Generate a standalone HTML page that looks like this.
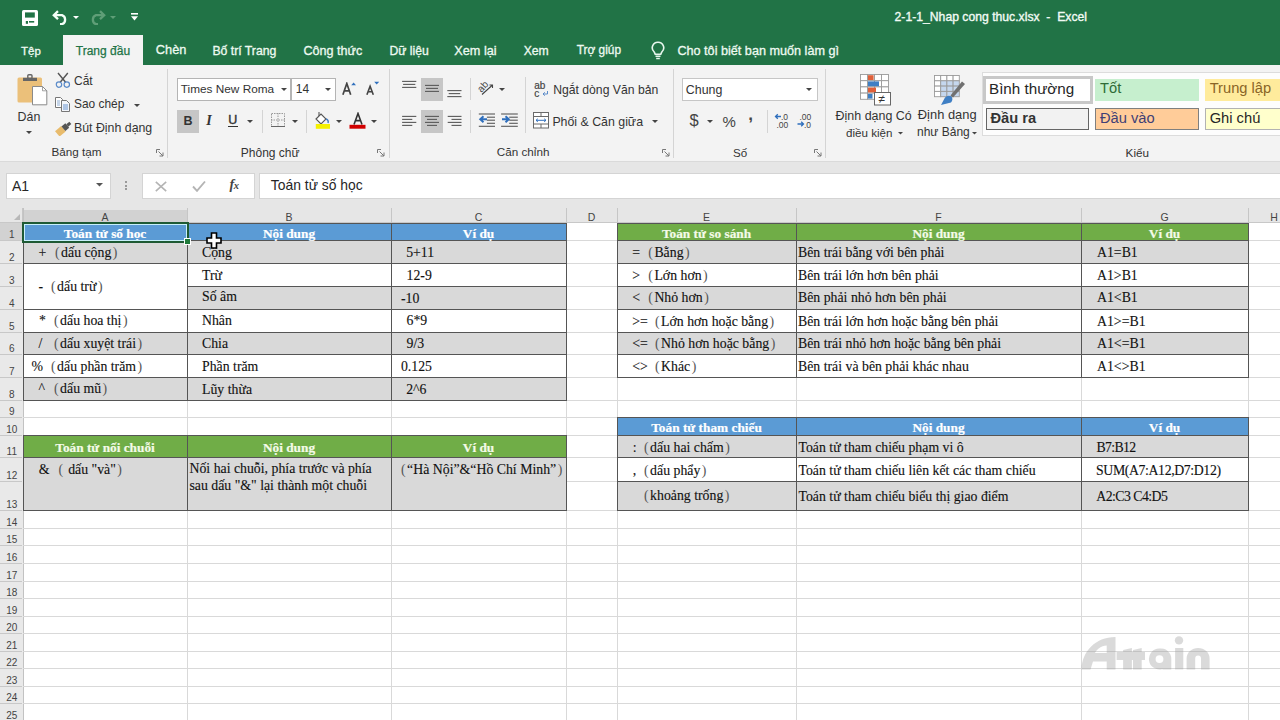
<!DOCTYPE html>
<html><head><meta charset="utf-8"><title>Excel</title>
<style>
html,body{margin:0;padding:0;}
body{width:1280px;height:720px;position:relative;overflow:hidden;background:#ffffff;font-family:"Liberation Sans",sans-serif;}
</style></head><body>
<div style="position:absolute;left:0px;top:0px;width:1280px;height:65px;background:#217346"></div>
<svg style="position:absolute;left:22px;top:9.5px;" width="16" height="16" viewBox="0 0 16 16"><rect x="0" y="0" width="16" height="16" rx="1.6" fill="#fff"/><rect x="3" y="2.4" width="9.8" height="5.2" fill="#217346"/><rect x="3.8" y="11" width="2.2" height="2.8" fill="#217346"/><rect x="7" y="11" width="5.2" height="1.6" fill="#217346"/></svg>
<svg style="position:absolute;left:51px;top:9px;" width="19" height="16" viewBox="0 0 19 16"><path d="M3.5 6.2 H11 A4.8 4.8 0 0 1 11 15.2 H9" fill="none" stroke="#f4fff8" stroke-width="2.3"/><path d="M7 2.2 L2.8 6.2 L7 10.2" stroke="#f4fff8" stroke-width="2.3" fill="none"/></svg>
<svg style="position:absolute;left:73px;top:15.5px;" width="6" height="4" viewBox="0 0 6 4"><path d="M0 0 L6 0 L3 3 Z" fill="#fff"/></svg>
<svg style="position:absolute;left:89px;top:9px;" width="18" height="16" viewBox="0 0 18 16"><path d="M14.5 6.2 H7 A4.8 4.8 0 0 0 7 15.2 H9" fill="none" stroke="#5f9e77" stroke-width="2.3"/><path d="M11 2.2 L15.2 6.2 L11 10.2" stroke="#5f9e77" stroke-width="2.3" fill="none"/></svg>
<svg style="position:absolute;left:110px;top:15.5px;" width="6" height="4" viewBox="0 0 6 4"><path d="M0 0 L6 0 L3 3 Z" fill="#5f9e77"/></svg>
<svg style="position:absolute;left:130.5px;top:13px;" width="7" height="9" viewBox="0 0 7 9"><rect x="0" y="0" width="7" height="1.6" fill="#fff"/><path d="M0 3.3 L7 3.3 L3.5 7.5 Z" fill="#fff"/></svg>
<div style="position:absolute;left:894.6px;top:10.57px;font-family:'Liberation Sans', sans-serif;font-size:12.2px;line-height:12.2px;font-weight:400;color:#f2fbf5;white-space:pre;-webkit-text-stroke:0.35px #f2fbf5;">2-1-1_Nhap cong thuc.xlsx  -  Excel</div>
<div style="position:absolute;left:63px;top:35px;width:79.5px;height:31px;background:#f3f3f3"></div>
<div style="position:absolute;left:21px;top:45.57px;font-family:'Liberation Sans', sans-serif;font-size:11.5px;line-height:11.5px;font-weight:400;color:#eefaf1;white-space:pre;-webkit-text-stroke:0.3px #eefaf1;">Tệp</div>
<div style="position:absolute;left:75.8px;top:45.14px;font-family:'Liberation Sans', sans-serif;font-size:12.0px;line-height:12.0px;font-weight:400;color:#217346;white-space:pre;-webkit-text-stroke:0.25px #217346;">Trang đầu</div>
<div style="position:absolute;left:155.8px;top:44.46px;font-family:'Liberation Sans', sans-serif;font-size:12.8px;line-height:12.8px;font-weight:400;color:#eefaf1;white-space:pre;-webkit-text-stroke:0.3px #eefaf1;">Chèn</div>
<div style="position:absolute;left:212.4px;top:44.93px;font-family:'Liberation Sans', sans-serif;font-size:12.25px;line-height:12.25px;font-weight:400;color:#eefaf1;white-space:pre;-webkit-text-stroke:0.3px #eefaf1;">Bố trí Trang</div>
<div style="position:absolute;left:303.4px;top:44.63px;font-family:'Liberation Sans', sans-serif;font-size:12.6px;line-height:12.6px;font-weight:400;color:#eefaf1;white-space:pre;-webkit-text-stroke:0.3px #eefaf1;">Công thức</div>
<div style="position:absolute;left:389.5px;top:44.97px;font-family:'Liberation Sans', sans-serif;font-size:12.2px;line-height:12.2px;font-weight:400;color:#eefaf1;white-space:pre;-webkit-text-stroke:0.3px #eefaf1;">Dữ liệu</div>
<div style="position:absolute;left:454.3px;top:44.55px;font-family:'Liberation Sans', sans-serif;font-size:12.7px;line-height:12.7px;font-weight:400;color:#eefaf1;white-space:pre;-webkit-text-stroke:0.3px #eefaf1;">Xem lại</div>
<div style="position:absolute;left:523.7px;top:44.97px;font-family:'Liberation Sans', sans-serif;font-size:12.2px;line-height:12.2px;font-weight:400;color:#eefaf1;white-space:pre;-webkit-text-stroke:0.3px #eefaf1;">Xem</div>
<div style="position:absolute;left:576.8px;top:45.27px;font-family:'Liberation Sans', sans-serif;font-size:11.85px;line-height:11.85px;font-weight:400;color:#eefaf1;white-space:pre;-webkit-text-stroke:0.3px #eefaf1;">Trợ giúp</div>
<svg style="position:absolute;left:651px;top:41px;" width="14" height="19" viewBox="0 0 14 19"><path d="M7 1.2 A5.6 5.6 0 0 0 3.2 11 L4.2 13.2 H9.8 L10.8 11 A5.6 5.6 0 0 0 7 1.2 Z" fill="none" stroke="#e8f7ee" stroke-width="1.6"/><path d="M4.5 15.3 H9.5 M5.2 17.5 H8.8" stroke="#e8f7ee" stroke-width="1.5"/></svg>
<div style="position:absolute;left:677.4px;top:44.59px;font-family:'Liberation Sans', sans-serif;font-size:12.65px;line-height:12.65px;font-weight:400;color:#eefaf1;white-space:pre;-webkit-text-stroke:0.3px #eefaf1;">Cho tôi biết bạn muốn làm gì</div>
<div style="position:absolute;left:0px;top:65px;width:1280px;height:97px;background:#f3f3f3"></div>
<div style="position:absolute;left:0px;top:162px;width:1280px;height:48px;background:#e6e6e6"></div>
<div style="position:absolute;left:0px;top:161px;width:1280px;height:1px;background:#dadada"></div>
<div style="position:absolute;left:167px;top:69px;width:1px;height:89px;background:#d4d4d4"></div>
<div style="position:absolute;left:389px;top:69px;width:1px;height:89px;background:#d4d4d4"></div>
<div style="position:absolute;left:673px;top:69px;width:1px;height:89px;background:#d4d4d4"></div>
<div style="position:absolute;left:825px;top:69px;width:1px;height:89px;background:#d4d4d4"></div>
<svg style="position:absolute;left:17px;top:74px;" width="31" height="32" viewBox="0 0 31 32"><rect x="0.5" y="3.5" width="24.5" height="25" rx="1.5" fill="#ebc07a"/><rect x="6" y="3.8" width="14" height="3.2" fill="#666"/><rect x="10.8" y="0.8" width="4.2" height="3.6" rx="1" fill="none" stroke="#666" stroke-width="1.4"/><path d="M15.5 12.5 H25.5 L29.8 16.8 V30.8 H15.5 Z" fill="#fff" stroke="#8a8a8a" stroke-width="1"/><path d="M25.5 12.5 V16.8 H29.8" fill="none" stroke="#8a8a8a" stroke-width="0.8"/></svg>
<div style="position:absolute;left:17.6px;top:110.50px;font-family:'Liberation Sans', sans-serif;font-size:12.4px;line-height:12.4px;font-weight:400;color:#333333;white-space:pre;">Dán</div>
<svg style="position:absolute;left:26px;top:130.5px;" width="6" height="4" viewBox="0 0 6 4"><path d="M0 0 L6 0 L3 3 Z" fill="#444"/></svg>
<svg style="position:absolute;left:55px;top:72px;" width="16" height="17" viewBox="0 0 16 17"><path d="M3 1 L10.8 10.5 M12.8 1 L5 10.5" stroke="#555" stroke-width="1.4"/><circle cx="4" cy="12.6" r="2.7" fill="none" stroke="#5b8bc9" stroke-width="1.2"/><circle cx="11.8" cy="12.6" r="2.7" fill="none" stroke="#5b8bc9" stroke-width="1.2"/></svg>
<div style="position:absolute;left:74px;top:75.34px;font-family:'Liberation Sans', sans-serif;font-size:12.0px;line-height:12.0px;font-weight:400;color:#333333;white-space:pre;">Cắt</div>
<svg style="position:absolute;left:55px;top:97px;" width="16" height="15" viewBox="0 0 16 15"><path d="M0.5 0.5 H5.5 L7.5 2.5 V10.5 H0.5 Z" fill="#fff" stroke="#777" stroke-width="1"/><path d="M2 4 H5 M2 6 H5 M2 8 H5" stroke="#6f98c8" stroke-width="0.8"/><path d="M6.5 3.5 H11.5 L14.5 6.5 V14.5 H6.5 Z" fill="#f3f6fb" stroke="#777" stroke-width="1"/><path d="M8 8 H13 M8 10 H13 M8 12 H13" stroke="#5b8bc9" stroke-width="0.9"/></svg>
<div style="position:absolute;left:74px;top:98.93px;font-family:'Liberation Sans', sans-serif;font-size:11.9px;line-height:11.9px;font-weight:400;color:#333333;white-space:pre;">Sao chép</div>
<svg style="position:absolute;left:134px;top:104.0px;" width="6" height="4" viewBox="0 0 6 4"><path d="M0 0 L6 0 L3 3 Z" fill="#444"/></svg>
<svg style="position:absolute;left:55px;top:120px;" width="17" height="16" viewBox="0 0 17 16"><g transform="rotate(-40 8.5 8)"><rect x="0" y="5" width="8" height="7" fill="#e8bb6c"/><rect x="8" y="5.5" width="5" height="6" fill="#555"/><rect x="13" y="7" width="4" height="3" fill="#555"/></g></svg>
<div style="position:absolute;left:74px;top:122.35px;font-family:'Liberation Sans', sans-serif;font-size:12.35px;line-height:12.35px;font-weight:400;color:#333333;white-space:pre;">Bút Định dạng</div>
<div style="position:absolute;left:51.4px;top:146.10px;font-family:'Liberation Sans', sans-serif;font-size:11.7px;line-height:11.7px;font-weight:400;color:#333333;white-space:pre;">Bảng tạm</div>
<svg style="position:absolute;left:156px;top:149px;" width="8" height="8" viewBox="0 0 8 8"><path d="M0.5 0.5 H4 M0.5 0.5 V4" stroke="#777" stroke-width="1" fill="none"/><path d="M2.5 2.5 L7 7 M7 3.5 V7 H3.5" stroke="#777" stroke-width="1" fill="none"/></svg>
<div style="position:absolute;left:177px;top:77.5px;width:114px;height:23px;background:#fff;border:1px solid #b4b4b4;box-sizing:border-box"></div>
<div style="position:absolute;left:290.5px;top:77.5px;width:45.5px;height:23px;background:#fff;border:1px solid #b4b4b4;box-sizing:border-box"></div>
<div style="position:absolute;left:180.8px;top:83.61px;font-family:'Liberation Sans', sans-serif;font-size:11.8px;line-height:11.8px;font-weight:400;color:#333333;white-space:pre;">Times New Roma</div>
<svg style="position:absolute;left:280.6px;top:87.5px;" width="6" height="4" viewBox="0 0 6 4"><path d="M0 0 L6 0 L3 3 Z" fill="#444"/></svg>
<div style="position:absolute;left:295.8px;top:83.44px;font-family:'Liberation Sans', sans-serif;font-size:12px;line-height:12px;font-weight:400;color:#333333;white-space:pre;">14</div>
<svg style="position:absolute;left:324.6px;top:87.5px;" width="6" height="4" viewBox="0 0 6 4"><path d="M0 0 L6 0 L3 3 Z" fill="#444"/></svg>
<svg style="position:absolute;left:342px;top:82px;" width="16" height="14" viewBox="0 0 16 14"><path d="M0.9 12.8 L4.8 1.5 L8.7 12.8 M2.3 8.8 H7.3" stroke="#444" stroke-width="1.7" fill="none"/><path d="M9.2 3.2 L11.6 0.6 L14 3.2 Z" fill="#2f6fbd"/></svg>
<svg style="position:absolute;left:366px;top:81px;" width="16" height="15" viewBox="0 0 16 15"><path d="M0.9 13.8 L4.1 5.3 L7.3 13.8 M2.1 10.7 H6.1" stroke="#444" stroke-width="1.6" fill="none"/><path d="M8.2 0.8 H13.2 L10.7 3.4 Z" fill="#2f6fbd"/></svg>
<div style="position:absolute;left:177px;top:110px;width:22px;height:23px;background:#c6c6c6"></div>
<div style="position:absolute;left:183.5px;top:115.42px;font-family:'Liberation Sans', sans-serif;font-size:12.5px;line-height:12.5px;font-weight:700;color:#333;white-space:pre;">B</div>
<div style="position:absolute;left:206.2px;top:114.28px;font-family:'Liberation Serif', serif;font-size:14px;line-height:14px;font-weight:700;color:#333;white-space:pre;font-style:italic;">I</div>
<div style="position:absolute;left:228.3px;top:113.92px;font-family:'Liberation Sans', sans-serif;font-size:12.5px;line-height:12.5px;font-weight:400;color:#333;white-space:pre;-webkit-text-stroke:0.4px #333;">U</div>
<div style="position:absolute;left:228.3px;top:126px;width:9.6px;height:1px;background:#333"></div>
<svg style="position:absolute;left:247.4px;top:120.0px;" width="6" height="4" viewBox="0 0 6 4"><path d="M0 0 L6 0 L3 3 Z" fill="#444"/></svg>
<div style="position:absolute;left:262px;top:110px;width:1px;height:23px;background:#d4d4d4"></div>
<svg style="position:absolute;left:271px;top:113px;" width="14" height="14" viewBox="0 0 14 14"><rect x="0.5" y="0.5" width="13" height="13" fill="none" stroke="#999" stroke-width="1" stroke-dasharray="1.5,1"/><path d="M7 0 V14 M0 7 H14" stroke="#999" stroke-width="1" stroke-dasharray="1.5,1"/><path d="M0 13.5 H14" stroke="#666" stroke-width="1"/></svg>
<svg style="position:absolute;left:291.7px;top:120.0px;" width="6" height="4" viewBox="0 0 6 4"><path d="M0 0 L6 0 L3 3 Z" fill="#444"/></svg>
<div style="position:absolute;left:306px;top:110px;width:1px;height:23px;background:#d4d4d4"></div>
<svg style="position:absolute;left:313px;top:111px;" width="18" height="19" viewBox="0 0 18 19"><path d="M3 8 L8 3 L13 8 L8 13 Z" fill="#fff" stroke="#555" stroke-width="1.1"/><path d="M6 1 V5" stroke="#555" stroke-width="1.1"/><path d="M13 8 Q16 9 15 12" stroke="#4a7fc1" stroke-width="1.5" fill="none"/><rect x="2.8" y="13" width="14.2" height="4.8" fill="#f5f000"/></svg>
<svg style="position:absolute;left:336px;top:120.0px;" width="6" height="4" viewBox="0 0 6 4"><path d="M0 0 L6 0 L3 3 Z" fill="#444"/></svg>
<svg style="position:absolute;left:349px;top:112px;" width="18" height="18" viewBox="0 0 18 18"><path d="M5 12.5 L9 1.5 L13 12.5 M6.4 8.6 H11.6" stroke="#333" stroke-width="1.6" fill="none"/><rect x="0.5" y="12.8" width="16" height="3.9" fill="#d10000"/></svg>
<svg style="position:absolute;left:371.3px;top:120.0px;" width="6" height="4" viewBox="0 0 6 4"><path d="M0 0 L6 0 L3 3 Z" fill="#444"/></svg>
<div style="position:absolute;left:240.8px;top:146.84px;font-family:'Liberation Sans', sans-serif;font-size:12.0px;line-height:12.0px;font-weight:400;color:#333333;white-space:pre;">Phông chữ</div>
<svg style="position:absolute;left:377px;top:149px;" width="8" height="8" viewBox="0 0 8 8"><path d="M0.5 0.5 H4 M0.5 0.5 V4" stroke="#777" stroke-width="1" fill="none"/><path d="M2.5 2.5 L7 7 M7 3.5 V7 H3.5" stroke="#777" stroke-width="1" fill="none"/></svg>
<div style="position:absolute;left:421px;top:77.5px;width:22px;height:23.5px;background:#c6c6c6"></div>
<div style="position:absolute;left:421px;top:110px;width:22px;height:23px;background:#c6c6c6"></div>
<svg style="position:absolute;left:0px;top:0px;pointer-events:none;" width="1280" height="720" viewBox="0 0 1280 720"><rect x="402.1" y="80.85000000000001" width="14.199999999999989" height="1.1" fill="#5a5a5a"/><rect x="403.1" y="83.85000000000001" width="12.199999999999989" height="1.1" fill="#5a5a5a"/><rect x="402.1" y="86.85000000000001" width="14.199999999999989" height="1.1" fill="#5a5a5a"/></svg>
<svg style="position:absolute;left:0px;top:0px;pointer-events:none;" width="1280" height="720" viewBox="0 0 1280 720"><rect x="425" y="84.85000000000001" width="14" height="1.1" fill="#5a5a5a"/><rect x="426" y="87.85000000000001" width="12" height="1.1" fill="#5a5a5a"/><rect x="425" y="90.85000000000001" width="14" height="1.1" fill="#5a5a5a"/></svg>
<svg style="position:absolute;left:0px;top:0px;pointer-events:none;" width="1280" height="720" viewBox="0 0 1280 720"><rect x="447.3" y="90.05" width="14.199999999999989" height="1.1" fill="#5a5a5a"/><rect x="448.7" y="93.05" width="11.5" height="1.1" fill="#5a5a5a"/><rect x="447.3" y="96.05" width="14.199999999999989" height="1.1" fill="#5a5a5a"/></svg>
<svg style="position:absolute;left:0px;top:0px;pointer-events:none;" width="1280" height="720" viewBox="0 0 1280 720"><rect x="402.1" y="115.85000000000001" width="14.199999999999989" height="1.1" fill="#5a5a5a"/><rect x="402.1" y="118.85000000000001" width="10.199999999999989" height="1.1" fill="#5a5a5a"/><rect x="402.1" y="121.85000000000001" width="14.199999999999989" height="1.1" fill="#5a5a5a"/><rect x="402.1" y="124.85000000000001" width="10.199999999999989" height="1.1" fill="#5a5a5a"/></svg>
<svg style="position:absolute;left:0px;top:0px;pointer-events:none;" width="1280" height="720" viewBox="0 0 1280 720"><rect x="425" y="115.85000000000001" width="14" height="1.1" fill="#5a5a5a"/><rect x="427" y="118.85000000000001" width="10" height="1.1" fill="#5a5a5a"/><rect x="425" y="121.85000000000001" width="14" height="1.1" fill="#5a5a5a"/><rect x="427" y="124.85000000000001" width="10" height="1.1" fill="#5a5a5a"/></svg>
<svg style="position:absolute;left:0px;top:0px;pointer-events:none;" width="1280" height="720" viewBox="0 0 1280 720"><rect x="447.7" y="115.85000000000001" width="13.800000000000011" height="1.1" fill="#5a5a5a"/><rect x="451.5" y="118.85000000000001" width="10.0" height="1.1" fill="#5a5a5a"/><rect x="447.7" y="121.85000000000001" width="13.800000000000011" height="1.1" fill="#5a5a5a"/><rect x="451.5" y="124.85000000000001" width="10.0" height="1.1" fill="#5a5a5a"/></svg>
<div style="position:absolute;left:470px;top:78px;width:1px;height:22px;background:#d4d4d4"></div>
<svg style="position:absolute;left:478px;top:80px;" width="22" height="16" viewBox="0 0 22 16"><text x="0" y="0" font-family="Liberation Sans" font-size="10" fill="#444" transform="translate(3.5 13) rotate(-48)">ab</text><path d="M4 14.5 L14.5 5 M11.5 5 L14.5 5 L14.5 8" stroke="#444" stroke-width="1.1" fill="none"/></svg>
<svg style="position:absolute;left:499px;top:87.5px;" width="6" height="4" viewBox="0 0 6 4"><path d="M0 0 L6 0 L3 3 Z" fill="#444"/></svg>
<div style="position:absolute;left:525px;top:77px;width:1px;height:56px;background:#d4d4d4"></div>
<svg style="position:absolute;left:534px;top:81px;" width="16" height="17" viewBox="0 0 16 17"><text x="0.3" y="8" font-family="Liberation Sans" font-size="10" fill="#444" stroke="#444" stroke-width="0.2">ab</text><text x="0.3" y="15.5" font-family="Liberation Sans" font-size="10" fill="#444" stroke="#444" stroke-width="0.2">c</text><path d="M13.5 10 V13 H9 M10.8 11.3 L9 13 L10.8 14.7" stroke="#5b8bc9" stroke-width="1" fill="none"/></svg>
<div style="position:absolute;left:553.2px;top:83.67px;font-family:'Liberation Sans', sans-serif;font-size:12.2px;line-height:12.2px;font-weight:400;color:#333333;white-space:pre;">Ngắt dòng Văn bản</div>
<div style="position:absolute;left:470px;top:110px;width:1px;height:23px;background:#d4d4d4"></div>
<svg style="position:absolute;left:0px;top:0px;pointer-events:none;" width="1280" height="720" viewBox="0 0 1280 720"><rect x="478.8" y="113.45" width="16.19999999999999" height="1.1" fill="#5a5a5a"/><rect x="486.9" y="116.65" width="8.100000000000023" height="1.1" fill="#5a5a5a"/><rect x="486.9" y="119.65" width="8.100000000000023" height="1.1" fill="#5a5a5a"/><rect x="486.9" y="122.75" width="8.100000000000023" height="1.1" fill="#5a5a5a"/><rect x="478.8" y="125.75" width="16.19999999999999" height="1.1" fill="#5a5a5a"/></svg>
<svg style="position:absolute;left:478px;top:114px;" width="10" height="11" viewBox="0 0 10 11"><path d="M9 5.3 H3 M5.5 2.3 L2.2 5.3 L5.5 8.3" stroke="#2f6fbd" stroke-width="1.9" fill="none"/></svg>
<svg style="position:absolute;left:0px;top:0px;pointer-events:none;" width="1280" height="720" viewBox="0 0 1280 720"><rect x="501.1" y="113.45" width="16.699999999999932" height="1.1" fill="#5a5a5a"/><rect x="509.2" y="116.65" width="8.599999999999966" height="1.1" fill="#5a5a5a"/><rect x="509.2" y="119.65" width="8.599999999999966" height="1.1" fill="#5a5a5a"/><rect x="509.2" y="122.75" width="8.599999999999966" height="1.1" fill="#5a5a5a"/><rect x="501.1" y="125.75" width="16.699999999999932" height="1.1" fill="#5a5a5a"/></svg>
<svg style="position:absolute;left:501px;top:114px;" width="10" height="11" viewBox="0 0 10 11"><path d="M1 5.3 H7 M4.5 2.3 L7.8 5.3 L4.5 8.3" stroke="#2f6fbd" stroke-width="1.9" fill="none"/></svg>
<svg style="position:absolute;left:533px;top:112px;" width="17" height="17" viewBox="0 0 17 17"><rect x="0.5" y="0.5" width="15" height="15.5" fill="#fff" stroke="#6a6a6a" stroke-width="1"/><path d="M0.5 4.5 H15.5 M0.5 12 H15.5 M8 0.5 V4.5 M8 12 V16" stroke="#6a6a6a" stroke-width="1"/><path d="M3 8.3 H13 M4.8 6.8 L3 8.3 L4.8 9.8 M11.2 6.8 L13 8.3 L11.2 9.8" stroke="#2f6fbd" stroke-width="1" fill="none"/></svg>
<div style="position:absolute;left:552.4px;top:115.75px;font-family:'Liberation Sans', sans-serif;font-size:12.35px;line-height:12.35px;font-weight:400;color:#333333;white-space:pre;">Phối &amp; Căn giữa</div>
<svg style="position:absolute;left:652px;top:120.0px;" width="6" height="4" viewBox="0 0 6 4"><path d="M0 0 L6 0 L3 3 Z" fill="#444"/></svg>
<div style="position:absolute;left:496.8px;top:146.30px;font-family:'Liberation Sans', sans-serif;font-size:11.7px;line-height:11.7px;font-weight:400;color:#333333;white-space:pre;">Căn chỉnh</div>
<svg style="position:absolute;left:661.5px;top:149px;" width="8" height="8" viewBox="0 0 8 8"><path d="M0.5 0.5 H4 M0.5 0.5 V4" stroke="#777" stroke-width="1" fill="none"/><path d="M2.5 2.5 L7 7 M7 3.5 V7 H3.5" stroke="#777" stroke-width="1" fill="none"/></svg>
<div style="position:absolute;left:682px;top:78px;width:135.5px;height:23px;background:#fff;border:1px solid #c6c6c6;box-sizing:border-box"></div>
<div style="position:absolute;left:685.8px;top:83.50px;font-family:'Liberation Sans', sans-serif;font-size:12.4px;line-height:12.4px;font-weight:400;color:#333333;white-space:pre;">Chung</div>
<svg style="position:absolute;left:806px;top:87.5px;" width="6" height="4" viewBox="0 0 6 4"><path d="M0 0 L6 0 L3 3 Z" fill="#444"/></svg>
<div style="position:absolute;left:689.6px;top:112.33px;font-family:'Liberation Sans', sans-serif;font-size:16.5px;line-height:16.5px;font-weight:400;color:#444;white-space:pre;">$</div>
<svg style="position:absolute;left:707px;top:120.0px;" width="6" height="4" viewBox="0 0 6 4"><path d="M0 0 L6 0 L3 3 Z" fill="#444"/></svg>
<div style="position:absolute;left:722.5px;top:113.80px;font-family:'Liberation Sans', sans-serif;font-size:15px;line-height:15px;font-weight:400;color:#444;white-space:pre;">%</div>
<div style="position:absolute;left:748.3px;top:106.11px;font-family:'Liberation Sans', sans-serif;font-size:17px;line-height:17px;font-weight:700;color:#444;white-space:pre;">,</div>
<div style="position:absolute;left:767px;top:110px;width:1px;height:23px;background:#d4d4d4"></div>
<svg style="position:absolute;left:774px;top:112px;" width="18" height="16" viewBox="0 0 18 16"><path d="M7 4.5 H1.5 M3.8 2.2 L1.5 4.5 L3.8 6.8" stroke="#2f6fbd" stroke-width="1.3" fill="none"/><text x="7" y="8" font-family="Liberation Sans" font-size="8.5" fill="#444">.0</text><text x="2.5" y="15.5" font-family="Liberation Sans" font-size="8.5" fill="#444">.00</text></svg>
<svg style="position:absolute;left:797px;top:112px;" width="18" height="16" viewBox="0 0 18 16"><text x="2.5" y="8" font-family="Liberation Sans" font-size="8.5" fill="#444">.00</text><path d="M0.5 12 H6.5 M4.2 9.7 L6.5 12 L4.2 14.3" stroke="#2f6fbd" stroke-width="1.3" fill="none"/><text x="7" y="15.5" font-family="Liberation Sans" font-size="8.5" fill="#444">.0</text></svg>
<div style="position:absolute;left:733px;top:146.88px;font-family:'Liberation Sans', sans-serif;font-size:11.6px;line-height:11.6px;font-weight:400;color:#333333;white-space:pre;">Số</div>
<svg style="position:absolute;left:813.5px;top:149px;" width="8" height="8" viewBox="0 0 8 8"><path d="M0.5 0.5 H4 M0.5 0.5 V4" stroke="#777" stroke-width="1" fill="none"/><path d="M2.5 2.5 L7 7 M7 3.5 V7 H3.5" stroke="#777" stroke-width="1" fill="none"/></svg>
<svg style="position:absolute;left:860px;top:74px;" width="32" height="32" viewBox="0 0 32 32"><rect x="0.5" y="0.5" width="7" height="6.2" fill="#fff" stroke="#9a9a9a" stroke-width="0.9"/><rect x="7.5" y="0.5" width="7" height="6.2" fill="#fff" stroke="#9a9a9a" stroke-width="0.9"/><rect x="14.5" y="0.5" width="7" height="6.2" fill="#fff" stroke="#9a9a9a" stroke-width="0.9"/><rect x="21.5" y="0.5" width="7" height="6.2" fill="#fff" stroke="#9a9a9a" stroke-width="0.9"/><rect x="0.5" y="6.7" width="7" height="6.2" fill="#fff" stroke="#9a9a9a" stroke-width="0.9"/><rect x="7.5" y="6.7" width="7" height="6.2" fill="#fff" stroke="#9a9a9a" stroke-width="0.9"/><rect x="14.5" y="6.7" width="7" height="6.2" fill="#fff" stroke="#9a9a9a" stroke-width="0.9"/><rect x="21.5" y="6.7" width="7" height="6.2" fill="#fff" stroke="#9a9a9a" stroke-width="0.9"/><rect x="0.5" y="12.9" width="7" height="6.2" fill="#fff" stroke="#9a9a9a" stroke-width="0.9"/><rect x="7.5" y="12.9" width="7" height="6.2" fill="#fff" stroke="#9a9a9a" stroke-width="0.9"/><rect x="14.5" y="12.9" width="7" height="6.2" fill="#fff" stroke="#9a9a9a" stroke-width="0.9"/><rect x="21.5" y="12.9" width="7" height="6.2" fill="#fff" stroke="#9a9a9a" stroke-width="0.9"/><rect x="0.5" y="19.1" width="7" height="6.2" fill="#fff" stroke="#9a9a9a" stroke-width="0.9"/><rect x="7.5" y="19.1" width="7" height="6.2" fill="#fff" stroke="#9a9a9a" stroke-width="0.9"/><rect x="14.5" y="19.1" width="7" height="6.2" fill="#fff" stroke="#9a9a9a" stroke-width="0.9"/><rect x="21.5" y="19.1" width="7" height="6.2" fill="#fff" stroke="#9a9a9a" stroke-width="0.9"/><rect x="8" y="1.2" width="5.6" height="4.8" fill="#e0603a"/><rect x="8" y="7.4" width="11" height="4.8" fill="#3f7fc4"/><rect x="8" y="13.6" width="8" height="4.8" fill="#e0603a"/><rect x="8" y="19.8" width="4.5" height="4.8" fill="#3f7fc4"/><rect x="14.5" y="18.5" width="16" height="12.5" fill="#fff" stroke="#666" stroke-width="1"/><text x="18.5" y="29" font-family="Liberation Sans" font-size="12" fill="#333">≠</text></svg>
<div style="position:absolute;left:835.6px;top:109.86px;font-family:'Liberation Sans', sans-serif;font-size:12.45px;line-height:12.45px;font-weight:400;color:#333333;white-space:pre;">Định dạng Có</div>
<div style="position:absolute;left:846px;top:126.58px;font-family:'Liberation Sans', sans-serif;font-size:11.6px;line-height:11.6px;font-weight:400;color:#333333;white-space:pre;">điều kiện</div>
<svg style="position:absolute;left:897.5px;top:131.75px;" width="5.0" height="3.5" viewBox="0 0 5.0 3.5"><path d="M0 0 L5.0 0 L2.5 2.5 Z" fill="#444"/></svg>
<svg style="position:absolute;left:934px;top:75px;" width="32" height="31" viewBox="0 0 32 31"><rect x="0.5" y="0.5" width="6.2" height="5.3" fill="#fff" stroke="#9a9a9a" stroke-width="0.9"/><rect x="6.7" y="0.5" width="6.2" height="5.3" fill="#fff" stroke="#9a9a9a" stroke-width="0.9"/><rect x="12.9" y="0.5" width="6.2" height="5.3" fill="#fff" stroke="#9a9a9a" stroke-width="0.9"/><rect x="19.1" y="0.5" width="6.2" height="5.3" fill="#fff" stroke="#9a9a9a" stroke-width="0.9"/><rect x="0.5" y="5.8" width="6.2" height="5.3" fill="#fff" stroke="#9a9a9a" stroke-width="0.9"/><rect x="6.7" y="5.8" width="6.2" height="5.3" fill="#c5d7ee" stroke="#9a9a9a" stroke-width="0.9"/><rect x="12.9" y="5.8" width="6.2" height="5.3" fill="#c5d7ee" stroke="#9a9a9a" stroke-width="0.9"/><rect x="19.1" y="5.8" width="6.2" height="5.3" fill="#c5d7ee" stroke="#9a9a9a" stroke-width="0.9"/><rect x="0.5" y="11.1" width="6.2" height="5.3" fill="#fff" stroke="#9a9a9a" stroke-width="0.9"/><rect x="6.7" y="11.1" width="6.2" height="5.3" fill="#c5d7ee" stroke="#9a9a9a" stroke-width="0.9"/><rect x="12.9" y="11.1" width="6.2" height="5.3" fill="#c5d7ee" stroke="#9a9a9a" stroke-width="0.9"/><rect x="19.1" y="11.1" width="6.2" height="5.3" fill="#c5d7ee" stroke="#9a9a9a" stroke-width="0.9"/><rect x="0.5" y="16.4" width="6.2" height="5.3" fill="#fff" stroke="#9a9a9a" stroke-width="0.9"/><rect x="6.7" y="16.4" width="6.2" height="5.3" fill="#c5d7ee" stroke="#9a9a9a" stroke-width="0.9"/><rect x="12.9" y="16.4" width="6.2" height="5.3" fill="#c5d7ee" stroke="#9a9a9a" stroke-width="0.9"/><rect x="19.1" y="16.4" width="6.2" height="5.3" fill="#c5d7ee" stroke="#9a9a9a" stroke-width="0.9"/><path d="M7 30 L11 22.5 Q14 19.5 17.5 21.5 Q19.5 24.5 17 27.5 Z" fill="#3f7fc4"/><path d="M16.5 20.5 L28 6.5 L31 9 L19 22.5 Z" fill="#707070"/></svg>
<div style="position:absolute;left:917.8px;top:109.48px;font-family:'Liberation Sans', sans-serif;font-size:12.9px;line-height:12.9px;font-weight:400;color:#333333;white-space:pre;">Định dạng</div>
<div style="position:absolute;left:917px;top:126.24px;font-family:'Liberation Sans', sans-serif;font-size:12.0px;line-height:12.0px;font-weight:400;color:#333333;white-space:pre;">như Bảng</div>
<svg style="position:absolute;left:971.5px;top:131.75px;" width="5.0" height="3.5" viewBox="0 0 5.0 3.5"><path d="M0 0 L5.0 0 L2.5 2.5 Z" fill="#444"/></svg>
<div style="position:absolute;left:982px;top:72px;width:302px;height:64px;background:#fdfdfd;border:1px solid #dcdcdc;box-sizing:border-box"></div>
<div style="position:absolute;left:983px;top:76px;width:109.5px;height:27.5px;background:#fff;border:3px solid #c8c8c8;box-sizing:border-box"></div>
<div style="position:absolute;left:989px;top:80.93px;font-family:'Liberation Sans', sans-serif;font-size:15.2px;line-height:15.2px;font-weight:400;color:#262626;white-space:pre;">Bình thường</div>
<div style="position:absolute;left:1095px;top:79px;width:103.5px;height:22px;background:#c6efce"></div>
<div style="position:absolute;left:1100px;top:81.36px;font-family:'Liberation Sans', sans-serif;font-size:14.7px;line-height:14.7px;font-weight:400;color:#2f6b37;white-space:pre;">Tốt</div>
<div style="position:absolute;left:1205px;top:79px;width:75px;height:22px;background:#ffeb9c"></div>
<div style="position:absolute;left:1209.7px;top:81.36px;font-family:'Liberation Sans', sans-serif;font-size:14.7px;line-height:14.7px;font-weight:400;color:#8a6526;white-space:pre;">Trung lập</div>
<div style="position:absolute;left:985.5px;top:107.5px;width:103.5px;height:22.5px;background:#f2f2f2;border:1px solid #666;box-sizing:border-box"></div>
<div style="position:absolute;left:990.5px;top:111.06px;font-family:'Liberation Sans', sans-serif;font-size:14.7px;line-height:14.7px;font-weight:700;color:#333;white-space:pre;">Đầu ra</div>
<div style="position:absolute;left:1095px;top:107.5px;width:103.5px;height:22.5px;background:#ffcc99;border:1px solid #7f7f7f;box-sizing:border-box"></div>
<div style="position:absolute;left:1100px;top:111.06px;font-family:'Liberation Sans', sans-serif;font-size:14.7px;line-height:14.7px;font-weight:400;color:#3f3f76;white-space:pre;">Đầu vào</div>
<div style="position:absolute;left:1205px;top:107.5px;width:80px;height:22.5px;background:#ffffcc;border:1px solid #b2b2b2;box-sizing:border-box"></div>
<div style="position:absolute;left:1209.7px;top:111.06px;font-family:'Liberation Sans', sans-serif;font-size:14.7px;line-height:14.7px;font-weight:400;color:#262626;white-space:pre;">Ghi chú</div>
<div style="position:absolute;left:1125.6px;top:147.00px;font-family:'Liberation Sans', sans-serif;font-size:11.7px;line-height:11.7px;font-weight:400;color:#333333;white-space:pre;">Kiểu</div>
<div style="position:absolute;left:6px;top:173px;width:104.5px;height:26px;background:#fff;border:1px solid #d4d4d4;box-sizing:border-box"></div>
<div style="position:absolute;left:12px;top:179.25px;font-family:'Liberation Sans', sans-serif;font-size:14px;line-height:14px;font-weight:400;color:#262626;white-space:pre;">A1</div>
<svg style="position:absolute;left:96.0px;top:183.25px;" width="7.0" height="4.5" viewBox="0 0 7.0 4.5"><path d="M0 0 L7.0 0 L3.5 3.5 Z" fill="#555"/></svg>
<div style="position:absolute;left:125px;top:180.8px;width:2px;height:2px;background:#9a9a9a"></div>
<div style="position:absolute;left:125px;top:184.5px;width:2px;height:2px;background:#9a9a9a"></div>
<div style="position:absolute;left:125px;top:188.3px;width:2px;height:2px;background:#9a9a9a"></div>
<div style="position:absolute;left:142px;top:173px;width:113px;height:26px;background:#fff;border:1px solid #d4d4d4;box-sizing:border-box"></div>
<svg style="position:absolute;left:155px;top:181px;" width="12" height="11" viewBox="0 0 12 11"><path d="M0.8 0.8 L11.2 10.2 M11.2 0.8 L0.8 10.2" stroke="#b4b4b4" stroke-width="1.6"/></svg>
<svg style="position:absolute;left:192px;top:180px;" width="14" height="12" viewBox="0 0 14 12"><path d="M1 6.5 L5 10.8 L13 1.5" stroke="#b4b4b4" stroke-width="1.9" fill="none"/></svg>
<div style="position:absolute;left:229.4px;top:178.28px;font-family:'Liberation Serif', serif;font-size:14px;line-height:14px;font-weight:700;color:#444;white-space:pre;font-style:italic;">f</div>
<div style="position:absolute;left:233.8px;top:181.21px;font-family:'Liberation Serif', serif;font-size:10.5px;line-height:10.5px;font-weight:700;color:#444;white-space:pre;font-style:italic;">x</div>
<div style="position:absolute;left:259px;top:173px;width:1030px;height:26px;background:#fff;border:1px solid #d4d4d4;box-sizing:border-box"></div>
<div style="position:absolute;left:270.8px;top:179.23px;font-family:'Liberation Sans', sans-serif;font-size:13.9px;line-height:13.9px;font-weight:400;color:#262626;white-space:pre;">Toán tử số học</div>
<div style="position:absolute;left:23px;top:223px;width:1257px;height:497px;background:#fff"></div>
<div style="position:absolute;left:0px;top:210px;width:1280px;height:13px;background:#e6e6e6"></div>
<div style="position:absolute;left:23px;top:210px;width:164px;height:13px;background:#d2d2d2"></div>
<div style="position:absolute;left:0px;top:222px;width:1280px;height:1px;background:#c8c8c8"></div>
<div style="position:absolute;left:187px;top:208px;width:1px;height:15px;background:#c6c6c6"></div>
<div style="position:absolute;left:391px;top:208px;width:1px;height:15px;background:#c6c6c6"></div>
<div style="position:absolute;left:566px;top:208px;width:1px;height:15px;background:#c6c6c6"></div>
<div style="position:absolute;left:617px;top:208px;width:1px;height:15px;background:#c6c6c6"></div>
<div style="position:absolute;left:796px;top:208px;width:1px;height:15px;background:#c6c6c6"></div>
<div style="position:absolute;left:1081px;top:208px;width:1px;height:15px;background:#c6c6c6"></div>
<div style="position:absolute;left:1248px;top:208px;width:1px;height:15px;background:#c6c6c6"></div>
<div style="position:absolute;left:22px;top:208px;width:1px;height:15px;background:#c6c6c6"></div>
<svg style="position:absolute;left:14px;top:214px;" width="6" height="6" viewBox="0 0 6 6"><path d="M6 0 V6 H0 Z" fill="#b8b8b8"/></svg>
<div style="position:absolute;left:-295.0px;width:800px;text-align:center;top:212.11px;font-family:'Liberation Sans', sans-serif;font-size:10.5px;line-height:10.5px;font-weight:400;color:#444;white-space:pre;">A</div>
<div style="position:absolute;left:-111.0px;width:800px;text-align:center;top:212.11px;font-family:'Liberation Sans', sans-serif;font-size:10.5px;line-height:10.5px;font-weight:400;color:#444;white-space:pre;">B</div>
<div style="position:absolute;left:78.5px;width:800px;text-align:center;top:212.11px;font-family:'Liberation Sans', sans-serif;font-size:10.5px;line-height:10.5px;font-weight:400;color:#444;white-space:pre;">C</div>
<div style="position:absolute;left:191.5px;width:800px;text-align:center;top:212.11px;font-family:'Liberation Sans', sans-serif;font-size:10.5px;line-height:10.5px;font-weight:400;color:#444;white-space:pre;">D</div>
<div style="position:absolute;left:306.5px;width:800px;text-align:center;top:212.11px;font-family:'Liberation Sans', sans-serif;font-size:10.5px;line-height:10.5px;font-weight:400;color:#444;white-space:pre;">E</div>
<div style="position:absolute;left:538.5px;width:800px;text-align:center;top:212.11px;font-family:'Liberation Sans', sans-serif;font-size:10.5px;line-height:10.5px;font-weight:400;color:#444;white-space:pre;">F</div>
<div style="position:absolute;left:764.5px;width:800px;text-align:center;top:212.11px;font-family:'Liberation Sans', sans-serif;font-size:10.5px;line-height:10.5px;font-weight:400;color:#444;white-space:pre;">G</div>
<div style="position:absolute;left:874px;width:800px;text-align:center;top:212.11px;font-family:'Liberation Sans', sans-serif;font-size:10.5px;line-height:10.5px;font-weight:400;color:#444;white-space:pre;">H</div>
<div style="position:absolute;left:0px;top:223px;width:23px;height:497px;background:#e9e9e9"></div>
<div style="position:absolute;left:0px;top:223px;width:22px;height:17px;background:#d2d2d2"></div>
<div style="position:absolute;left:23px;top:208px;width:1px;height:512px;background:#c2c2c2"></div>
<div style="position:absolute;left:0px;top:240px;width:22px;height:1px;background:#c8c8c8"></div>
<div style="position:absolute;left:-388.2px;width:800px;text-align:center;top:229.53px;font-family:'Liberation Sans', sans-serif;font-size:10px;line-height:10px;font-weight:400;color:#444;white-space:pre;">1</div>
<div style="position:absolute;left:0px;top:263px;width:22px;height:1px;background:#c8c8c8"></div>
<div style="position:absolute;left:-388.2px;width:800px;text-align:center;top:252.53px;font-family:'Liberation Sans', sans-serif;font-size:10px;line-height:10px;font-weight:400;color:#444;white-space:pre;">2</div>
<div style="position:absolute;left:0px;top:286px;width:22px;height:1px;background:#c8c8c8"></div>
<div style="position:absolute;left:-388.2px;width:800px;text-align:center;top:275.54px;font-family:'Liberation Sans', sans-serif;font-size:10px;line-height:10px;font-weight:400;color:#444;white-space:pre;">3</div>
<div style="position:absolute;left:0px;top:309px;width:22px;height:1px;background:#c8c8c8"></div>
<div style="position:absolute;left:-388.2px;width:800px;text-align:center;top:298.54px;font-family:'Liberation Sans', sans-serif;font-size:10px;line-height:10px;font-weight:400;color:#444;white-space:pre;">4</div>
<div style="position:absolute;left:0px;top:332px;width:22px;height:1px;background:#c8c8c8"></div>
<div style="position:absolute;left:-388.2px;width:800px;text-align:center;top:321.54px;font-family:'Liberation Sans', sans-serif;font-size:10px;line-height:10px;font-weight:400;color:#444;white-space:pre;">5</div>
<div style="position:absolute;left:0px;top:354px;width:22px;height:1px;background:#c8c8c8"></div>
<div style="position:absolute;left:-388.2px;width:800px;text-align:center;top:343.54px;font-family:'Liberation Sans', sans-serif;font-size:10px;line-height:10px;font-weight:400;color:#444;white-space:pre;">6</div>
<div style="position:absolute;left:0px;top:377px;width:22px;height:1px;background:#c8c8c8"></div>
<div style="position:absolute;left:-388.2px;width:800px;text-align:center;top:366.54px;font-family:'Liberation Sans', sans-serif;font-size:10px;line-height:10px;font-weight:400;color:#444;white-space:pre;">7</div>
<div style="position:absolute;left:0px;top:400px;width:22px;height:1px;background:#c8c8c8"></div>
<div style="position:absolute;left:-388.2px;width:800px;text-align:center;top:389.54px;font-family:'Liberation Sans', sans-serif;font-size:10px;line-height:10px;font-weight:400;color:#444;white-space:pre;">8</div>
<div style="position:absolute;left:0px;top:417px;width:22px;height:1px;background:#c8c8c8"></div>
<div style="position:absolute;left:-388.2px;width:800px;text-align:center;top:406.54px;font-family:'Liberation Sans', sans-serif;font-size:10px;line-height:10px;font-weight:400;color:#444;white-space:pre;">9</div>
<div style="position:absolute;left:0px;top:435px;width:22px;height:1px;background:#c8c8c8"></div>
<div style="position:absolute;left:-388.2px;width:800px;text-align:center;top:424.54px;font-family:'Liberation Sans', sans-serif;font-size:10px;line-height:10px;font-weight:400;color:#444;white-space:pre;">10</div>
<div style="position:absolute;left:0px;top:457px;width:22px;height:1px;background:#c8c8c8"></div>
<div style="position:absolute;left:-388.2px;width:800px;text-align:center;top:446.54px;font-family:'Liberation Sans', sans-serif;font-size:10px;line-height:10px;font-weight:400;color:#444;white-space:pre;">11</div>
<div style="position:absolute;left:0px;top:481px;width:22px;height:1px;background:#c8c8c8"></div>
<div style="position:absolute;left:-388.2px;width:800px;text-align:center;top:470.54px;font-family:'Liberation Sans', sans-serif;font-size:10px;line-height:10px;font-weight:400;color:#444;white-space:pre;">12</div>
<div style="position:absolute;left:0px;top:510px;width:22px;height:1px;background:#c8c8c8"></div>
<div style="position:absolute;left:-388.2px;width:800px;text-align:center;top:499.54px;font-family:'Liberation Sans', sans-serif;font-size:10px;line-height:10px;font-weight:400;color:#444;white-space:pre;">13</div>
<div style="position:absolute;left:0px;top:528px;width:22px;height:1px;background:#c8c8c8"></div>
<div style="position:absolute;left:-388.2px;width:800px;text-align:center;top:517.53px;font-family:'Liberation Sans', sans-serif;font-size:10px;line-height:10px;font-weight:400;color:#444;white-space:pre;">14</div>
<div style="position:absolute;left:0px;top:545px;width:22px;height:1px;background:#c8c8c8"></div>
<div style="position:absolute;left:-388.2px;width:800px;text-align:center;top:534.53px;font-family:'Liberation Sans', sans-serif;font-size:10px;line-height:10px;font-weight:400;color:#444;white-space:pre;">15</div>
<div style="position:absolute;left:0px;top:563px;width:22px;height:1px;background:#c8c8c8"></div>
<div style="position:absolute;left:-388.2px;width:800px;text-align:center;top:552.53px;font-family:'Liberation Sans', sans-serif;font-size:10px;line-height:10px;font-weight:400;color:#444;white-space:pre;">16</div>
<div style="position:absolute;left:0px;top:581px;width:22px;height:1px;background:#c8c8c8"></div>
<div style="position:absolute;left:-388.2px;width:800px;text-align:center;top:570.53px;font-family:'Liberation Sans', sans-serif;font-size:10px;line-height:10px;font-weight:400;color:#444;white-space:pre;">17</div>
<div style="position:absolute;left:0px;top:598px;width:22px;height:1px;background:#c8c8c8"></div>
<div style="position:absolute;left:-388.2px;width:800px;text-align:center;top:587.53px;font-family:'Liberation Sans', sans-serif;font-size:10px;line-height:10px;font-weight:400;color:#444;white-space:pre;">18</div>
<div style="position:absolute;left:0px;top:616px;width:22px;height:1px;background:#c8c8c8"></div>
<div style="position:absolute;left:-388.2px;width:800px;text-align:center;top:605.53px;font-family:'Liberation Sans', sans-serif;font-size:10px;line-height:10px;font-weight:400;color:#444;white-space:pre;">19</div>
<div style="position:absolute;left:0px;top:633px;width:22px;height:1px;background:#c8c8c8"></div>
<div style="position:absolute;left:-388.2px;width:800px;text-align:center;top:622.53px;font-family:'Liberation Sans', sans-serif;font-size:10px;line-height:10px;font-weight:400;color:#444;white-space:pre;">20</div>
<div style="position:absolute;left:0px;top:651px;width:22px;height:1px;background:#c8c8c8"></div>
<div style="position:absolute;left:-388.2px;width:800px;text-align:center;top:640.53px;font-family:'Liberation Sans', sans-serif;font-size:10px;line-height:10px;font-weight:400;color:#444;white-space:pre;">21</div>
<div style="position:absolute;left:0px;top:668px;width:22px;height:1px;background:#c8c8c8"></div>
<div style="position:absolute;left:-388.2px;width:800px;text-align:center;top:657.53px;font-family:'Liberation Sans', sans-serif;font-size:10px;line-height:10px;font-weight:400;color:#444;white-space:pre;">22</div>
<div style="position:absolute;left:0px;top:686px;width:22px;height:1px;background:#c8c8c8"></div>
<div style="position:absolute;left:-388.2px;width:800px;text-align:center;top:675.53px;font-family:'Liberation Sans', sans-serif;font-size:10px;line-height:10px;font-weight:400;color:#444;white-space:pre;">23</div>
<div style="position:absolute;left:0px;top:703px;width:22px;height:1px;background:#c8c8c8"></div>
<div style="position:absolute;left:-388.2px;width:800px;text-align:center;top:692.53px;font-family:'Liberation Sans', sans-serif;font-size:10px;line-height:10px;font-weight:400;color:#444;white-space:pre;">24</div>
<div style="position:absolute;left:0px;top:721px;width:22px;height:1px;background:#c8c8c8"></div>
<div style="position:absolute;left:-388.2px;width:800px;text-align:center;top:710.53px;font-family:'Liberation Sans', sans-serif;font-size:10px;line-height:10px;font-weight:400;color:#444;white-space:pre;">25</div>
<div style="position:absolute;left:187px;top:223px;width:1px;height:497px;background:#d9d9d9"></div>
<div style="position:absolute;left:391px;top:223px;width:1px;height:497px;background:#d9d9d9"></div>
<div style="position:absolute;left:566px;top:223px;width:1px;height:497px;background:#d9d9d9"></div>
<div style="position:absolute;left:617px;top:223px;width:1px;height:497px;background:#d9d9d9"></div>
<div style="position:absolute;left:796px;top:223px;width:1px;height:497px;background:#d9d9d9"></div>
<div style="position:absolute;left:1081px;top:223px;width:1px;height:497px;background:#d9d9d9"></div>
<div style="position:absolute;left:1248px;top:223px;width:1px;height:497px;background:#d9d9d9"></div>
<div style="position:absolute;left:23px;top:240px;width:1257px;height:1px;background:#d9d9d9"></div>
<div style="position:absolute;left:23px;top:263px;width:1257px;height:1px;background:#d9d9d9"></div>
<div style="position:absolute;left:23px;top:286px;width:1257px;height:1px;background:#d9d9d9"></div>
<div style="position:absolute;left:23px;top:309px;width:1257px;height:1px;background:#d9d9d9"></div>
<div style="position:absolute;left:23px;top:332px;width:1257px;height:1px;background:#d9d9d9"></div>
<div style="position:absolute;left:23px;top:354px;width:1257px;height:1px;background:#d9d9d9"></div>
<div style="position:absolute;left:23px;top:377px;width:1257px;height:1px;background:#d9d9d9"></div>
<div style="position:absolute;left:23px;top:400px;width:1257px;height:1px;background:#d9d9d9"></div>
<div style="position:absolute;left:23px;top:417px;width:1257px;height:1px;background:#d9d9d9"></div>
<div style="position:absolute;left:23px;top:435px;width:1257px;height:1px;background:#d9d9d9"></div>
<div style="position:absolute;left:23px;top:457px;width:1257px;height:1px;background:#d9d9d9"></div>
<div style="position:absolute;left:23px;top:481px;width:1257px;height:1px;background:#d9d9d9"></div>
<div style="position:absolute;left:23px;top:510px;width:1257px;height:1px;background:#d9d9d9"></div>
<div style="position:absolute;left:23px;top:528px;width:1257px;height:1px;background:#d9d9d9"></div>
<div style="position:absolute;left:23px;top:545px;width:1257px;height:1px;background:#d9d9d9"></div>
<div style="position:absolute;left:23px;top:563px;width:1257px;height:1px;background:#d9d9d9"></div>
<div style="position:absolute;left:23px;top:581px;width:1257px;height:1px;background:#d9d9d9"></div>
<div style="position:absolute;left:23px;top:598px;width:1257px;height:1px;background:#d9d9d9"></div>
<div style="position:absolute;left:23px;top:616px;width:1257px;height:1px;background:#d9d9d9"></div>
<div style="position:absolute;left:23px;top:633px;width:1257px;height:1px;background:#d9d9d9"></div>
<div style="position:absolute;left:23px;top:651px;width:1257px;height:1px;background:#d9d9d9"></div>
<div style="position:absolute;left:23px;top:668px;width:1257px;height:1px;background:#d9d9d9"></div>
<div style="position:absolute;left:23px;top:686px;width:1257px;height:1px;background:#d9d9d9"></div>
<div style="position:absolute;left:23px;top:703px;width:1257px;height:1px;background:#d9d9d9"></div>
<div style="position:absolute;left:23px;top:721px;width:1257px;height:1px;background:#d9d9d9"></div>
<div style="position:absolute;left:23px;top:739px;width:1257px;height:1px;background:#d9d9d9"></div>
<div style="position:absolute;left:23px;top:756px;width:1257px;height:1px;background:#d9d9d9"></div>
<div style="position:absolute;left:23px;top:223px;width:543px;height:177px;background:#fff"></div>
<div style="position:absolute;left:617px;top:223px;width:631px;height:154px;background:#fff"></div>
<div style="position:absolute;left:23px;top:223px;width:543px;height:17px;background:#5b9bd5"></div>
<div style="position:absolute;left:23px;top:240px;width:543px;height:23px;background:#d9d9d9"></div>
<div style="position:absolute;left:187px;top:286px;width:379px;height:23px;background:#d9d9d9"></div>
<div style="position:absolute;left:23px;top:332px;width:543px;height:22px;background:#d9d9d9"></div>
<div style="position:absolute;left:23px;top:377px;width:543px;height:23px;background:#d9d9d9"></div>
<div style="position:absolute;left:23px;top:223px;width:544px;height:1px;background:#555555"></div>
<div style="position:absolute;left:23px;top:240px;width:544px;height:1px;background:#555555"></div>
<div style="position:absolute;left:23px;top:263px;width:544px;height:1px;background:#555555"></div>
<div style="position:absolute;left:23px;top:309px;width:544px;height:1px;background:#555555"></div>
<div style="position:absolute;left:23px;top:332px;width:544px;height:1px;background:#555555"></div>
<div style="position:absolute;left:23px;top:354px;width:544px;height:1px;background:#555555"></div>
<div style="position:absolute;left:23px;top:377px;width:544px;height:1px;background:#555555"></div>
<div style="position:absolute;left:23px;top:400px;width:544px;height:1px;background:#555555"></div>
<div style="position:absolute;left:187px;top:286px;width:380px;height:1px;background:#555555"></div>
<div style="position:absolute;left:23px;top:223px;width:1px;height:178px;background:#555555"></div>
<div style="position:absolute;left:187px;top:223px;width:1px;height:178px;background:#555555"></div>
<div style="position:absolute;left:391px;top:223px;width:1px;height:178px;background:#555555"></div>
<div style="position:absolute;left:566px;top:223px;width:1px;height:178px;background:#555555"></div>
<div style="position:absolute;left:617px;top:223px;width:631px;height:17px;background:#70ad47"></div>
<div style="position:absolute;left:617px;top:240px;width:631px;height:23px;background:#d9d9d9"></div>
<div style="position:absolute;left:617px;top:286px;width:631px;height:23px;background:#d9d9d9"></div>
<div style="position:absolute;left:617px;top:332px;width:631px;height:22px;background:#d9d9d9"></div>
<div style="position:absolute;left:617px;top:223px;width:632px;height:1px;background:#555555"></div>
<div style="position:absolute;left:617px;top:240px;width:632px;height:1px;background:#555555"></div>
<div style="position:absolute;left:617px;top:263px;width:632px;height:1px;background:#555555"></div>
<div style="position:absolute;left:617px;top:286px;width:632px;height:1px;background:#555555"></div>
<div style="position:absolute;left:617px;top:309px;width:632px;height:1px;background:#555555"></div>
<div style="position:absolute;left:617px;top:332px;width:632px;height:1px;background:#555555"></div>
<div style="position:absolute;left:617px;top:354px;width:632px;height:1px;background:#555555"></div>
<div style="position:absolute;left:617px;top:377px;width:632px;height:1px;background:#555555"></div>
<div style="position:absolute;left:617px;top:223px;width:1px;height:155px;background:#555555"></div>
<div style="position:absolute;left:796px;top:223px;width:1px;height:155px;background:#555555"></div>
<div style="position:absolute;left:1081px;top:223px;width:1px;height:155px;background:#555555"></div>
<div style="position:absolute;left:1248px;top:223px;width:1px;height:155px;background:#555555"></div>
<div style="position:absolute;left:23px;top:435px;width:543px;height:22px;background:#70ad47"></div>
<div style="position:absolute;left:23px;top:457px;width:543px;height:53px;background:#d9d9d9"></div>
<div style="position:absolute;left:23px;top:435px;width:544px;height:1px;background:#555555"></div>
<div style="position:absolute;left:23px;top:457px;width:544px;height:1px;background:#555555"></div>
<div style="position:absolute;left:23px;top:510px;width:544px;height:1px;background:#555555"></div>
<div style="position:absolute;left:23px;top:435px;width:1px;height:76px;background:#555555"></div>
<div style="position:absolute;left:187px;top:435px;width:1px;height:76px;background:#555555"></div>
<div style="position:absolute;left:391px;top:435px;width:1px;height:76px;background:#555555"></div>
<div style="position:absolute;left:566px;top:435px;width:1px;height:76px;background:#555555"></div>
<div style="position:absolute;left:617px;top:417px;width:631px;height:18px;background:#5b9bd5"></div>
<div style="position:absolute;left:617px;top:435px;width:631px;height:22px;background:#d9d9d9"></div>
<div style="position:absolute;left:617px;top:481px;width:631px;height:29px;background:#d9d9d9"></div>
<div style="position:absolute;left:617px;top:417px;width:632px;height:1px;background:#555555"></div>
<div style="position:absolute;left:617px;top:435px;width:632px;height:1px;background:#555555"></div>
<div style="position:absolute;left:617px;top:457px;width:632px;height:1px;background:#555555"></div>
<div style="position:absolute;left:617px;top:481px;width:632px;height:1px;background:#555555"></div>
<div style="position:absolute;left:617px;top:510px;width:632px;height:1px;background:#555555"></div>
<div style="position:absolute;left:617px;top:417px;width:1px;height:94px;background:#555555"></div>
<div style="position:absolute;left:796px;top:417px;width:1px;height:94px;background:#555555"></div>
<div style="position:absolute;left:1081px;top:417px;width:1px;height:94px;background:#555555"></div>
<div style="position:absolute;left:1248px;top:417px;width:1px;height:94px;background:#555555"></div>
<div style="position:absolute;left:-295.0px;width:800px;text-align:center;top:227.15px;font-family:'Liberation Serif', serif;font-size:13.317px;line-height:13.317px;font-weight:700;color:#ffffff;white-space:pre;-webkit-text-stroke:0.2px #ffffff;">Toán tử số học</div>
<div style="position:absolute;left:-111.0px;width:800px;text-align:center;top:227.15px;font-family:'Liberation Serif', serif;font-size:13.317px;line-height:13.317px;font-weight:700;color:#ffffff;white-space:pre;-webkit-text-stroke:0.2px #ffffff;">Nội dung</div>
<div style="position:absolute;left:78.5px;width:800px;text-align:center;top:227.15px;font-family:'Liberation Serif', serif;font-size:13.317px;line-height:13.317px;font-weight:700;color:#ffffff;white-space:pre;-webkit-text-stroke:0.2px #ffffff;">Ví dụ</div>
<div style="position:absolute;left:38.4px;top:246.24px;font-family:'Liberation Serif', serif;font-size:13.8px;line-height:13.8px;font-weight:400;color:#111111;white-space:pre;-webkit-text-stroke:0.12px #111;letter-spacing:0px;">+</div>
<div style="position:absolute;left:54px;top:246.24px;font-family:'Liberation Serif', serif;font-size:13.8px;line-height:13.8px;font-weight:400;color:#111111;white-space:pre;-webkit-text-stroke:0.12px #111;letter-spacing:0px;"><span style="margin-left:1px;margin-right:1.5px;color:#555;-webkit-text-stroke:0px;">(</span>dấu cộng<span style="margin-left:1.5px;color:#555;-webkit-text-stroke:0px;">)</span></div>
<div style="position:absolute;left:38.4px;top:279.74px;font-family:'Liberation Serif', serif;font-size:13.8px;line-height:13.8px;font-weight:400;color:#111111;white-space:pre;-webkit-text-stroke:0.12px #111;letter-spacing:0px;">-</div>
<div style="position:absolute;left:50px;top:279.74px;font-family:'Liberation Serif', serif;font-size:13.8px;line-height:13.8px;font-weight:400;color:#111111;white-space:pre;-webkit-text-stroke:0.12px #111;letter-spacing:0px;"><span style="margin-left:1px;margin-right:1.5px;color:#555;-webkit-text-stroke:0px;">(</span>dấu trừ<span style="margin-left:1.5px;color:#555;-webkit-text-stroke:0px;">)</span></div>
<div style="position:absolute;left:39px;top:314.14px;font-family:'Liberation Serif', serif;font-size:13.8px;line-height:13.8px;font-weight:400;color:#111111;white-space:pre;-webkit-text-stroke:0.12px #111;letter-spacing:0px;">*</div>
<div style="position:absolute;left:53px;top:314.14px;font-family:'Liberation Serif', serif;font-size:13.8px;line-height:13.8px;font-weight:400;color:#111111;white-space:pre;-webkit-text-stroke:0.12px #111;letter-spacing:0px;"><span style="margin-left:1px;margin-right:1.5px;color:#555;-webkit-text-stroke:0px;">(</span>dấu hoa thị<span style="margin-left:1.5px;color:#555;-webkit-text-stroke:0px;">)</span></div>
<div style="position:absolute;left:38.4px;top:336.54px;font-family:'Liberation Serif', serif;font-size:13.8px;line-height:13.8px;font-weight:400;color:#111111;white-space:pre;-webkit-text-stroke:0.12px #111;letter-spacing:0px;">/</div>
<div style="position:absolute;left:53px;top:336.54px;font-family:'Liberation Serif', serif;font-size:13.8px;line-height:13.8px;font-weight:400;color:#111111;white-space:pre;-webkit-text-stroke:0.12px #111;letter-spacing:0px;"><span style="margin-left:1px;margin-right:1.5px;color:#555;-webkit-text-stroke:0px;">(</span>dấu xuyệt trái<span style="margin-left:1.5px;color:#555;-webkit-text-stroke:0px;">)</span></div>
<div style="position:absolute;left:31.5px;top:359.94px;font-family:'Liberation Serif', serif;font-size:13.8px;line-height:13.8px;font-weight:400;color:#111111;white-space:pre;-webkit-text-stroke:0.12px #111;letter-spacing:0px;">%</div>
<div style="position:absolute;left:50px;top:359.94px;font-family:'Liberation Serif', serif;font-size:13.8px;line-height:13.8px;font-weight:400;color:#111111;white-space:pre;-webkit-text-stroke:0.12px #111;letter-spacing:0px;"><span style="margin-left:1px;margin-right:1.5px;color:#555;-webkit-text-stroke:0px;">(</span>dấu phần trăm<span style="margin-left:1.5px;color:#555;-webkit-text-stroke:0px;">)</span></div>
<div style="position:absolute;left:38.4px;top:382.34px;font-family:'Liberation Serif', serif;font-size:13.8px;line-height:13.8px;font-weight:400;color:#111111;white-space:pre;-webkit-text-stroke:0.12px #111;letter-spacing:0px;">^</div>
<div style="position:absolute;left:53px;top:382.34px;font-family:'Liberation Serif', serif;font-size:13.8px;line-height:13.8px;font-weight:400;color:#111111;white-space:pre;-webkit-text-stroke:0.12px #111;letter-spacing:0px;"><span style="margin-left:1px;margin-right:1.5px;color:#555;-webkit-text-stroke:0px;">(</span>dấu mũ<span style="margin-left:1.5px;color:#555;-webkit-text-stroke:0px;">)</span></div>
<div style="position:absolute;left:202px;top:246.34px;font-family:'Liberation Serif', serif;font-size:13.8px;line-height:13.8px;font-weight:400;color:#111111;white-space:pre;-webkit-text-stroke:0.12px #111;letter-spacing:0px;">Cộng</div>
<div style="position:absolute;left:202px;top:269.34px;font-family:'Liberation Serif', serif;font-size:13.8px;line-height:13.8px;font-weight:400;color:#111111;white-space:pre;-webkit-text-stroke:0.12px #111;letter-spacing:0px;">Trừ</div>
<div style="position:absolute;left:202px;top:289.94px;font-family:'Liberation Serif', serif;font-size:13.8px;line-height:13.8px;font-weight:400;color:#111111;white-space:pre;-webkit-text-stroke:0.12px #111;letter-spacing:0px;">Số âm</div>
<div style="position:absolute;left:202px;top:314.04px;font-family:'Liberation Serif', serif;font-size:13.8px;line-height:13.8px;font-weight:400;color:#111111;white-space:pre;-webkit-text-stroke:0.12px #111;letter-spacing:0px;">Nhân</div>
<div style="position:absolute;left:202px;top:337.44px;font-family:'Liberation Serif', serif;font-size:13.8px;line-height:13.8px;font-weight:400;color:#111111;white-space:pre;-webkit-text-stroke:0.12px #111;letter-spacing:0px;">Chia</div>
<div style="position:absolute;left:202px;top:359.94px;font-family:'Liberation Serif', serif;font-size:13.8px;line-height:13.8px;font-weight:400;color:#111111;white-space:pre;-webkit-text-stroke:0.12px #111;letter-spacing:0px;">Phần trăm</div>
<div style="position:absolute;left:202px;top:382.74px;font-family:'Liberation Serif', serif;font-size:13.8px;line-height:13.8px;font-weight:400;color:#111111;white-space:pre;-webkit-text-stroke:0.12px #111;letter-spacing:0px;">Lũy thừa</div>
<div style="position:absolute;left:406.2px;top:246.34px;font-family:'Liberation Serif', serif;font-size:13.8px;line-height:13.8px;font-weight:400;color:#111111;white-space:pre;-webkit-text-stroke:0.12px #111;letter-spacing:0px;">5+11</div>
<div style="position:absolute;left:406.5px;top:269.34px;font-family:'Liberation Serif', serif;font-size:13.8px;line-height:13.8px;font-weight:400;color:#111111;white-space:pre;-webkit-text-stroke:0.12px #111;letter-spacing:0px;">12-9</div>
<div style="position:absolute;left:400.9px;top:291.94px;font-family:'Liberation Serif', serif;font-size:13.8px;line-height:13.8px;font-weight:400;color:#111111;white-space:pre;-webkit-text-stroke:0.12px #111;letter-spacing:0px;">-10</div>
<div style="position:absolute;left:406.5px;top:314.04px;font-family:'Liberation Serif', serif;font-size:13.8px;line-height:13.8px;font-weight:400;color:#111111;white-space:pre;-webkit-text-stroke:0.12px #111;letter-spacing:0px;">6*9</div>
<div style="position:absolute;left:406.5px;top:337.44px;font-family:'Liberation Serif', serif;font-size:13.8px;line-height:13.8px;font-weight:400;color:#111111;white-space:pre;-webkit-text-stroke:0.12px #111;letter-spacing:0px;">9/3</div>
<div style="position:absolute;left:400.9px;top:359.94px;font-family:'Liberation Serif', serif;font-size:13.8px;line-height:13.8px;font-weight:400;color:#111111;white-space:pre;-webkit-text-stroke:0.12px #111;letter-spacing:0px;">0.125</div>
<div style="position:absolute;left:406.2px;top:382.74px;font-family:'Liberation Serif', serif;font-size:13.8px;line-height:13.8px;font-weight:400;color:#111111;white-space:pre;-webkit-text-stroke:0.12px #111;letter-spacing:0px;">2^6</div>
<div style="position:absolute;left:306.5px;width:800px;text-align:center;top:227.15px;font-family:'Liberation Serif', serif;font-size:13.317px;line-height:13.317px;font-weight:700;color:#f4fbe8;white-space:pre;-webkit-text-stroke:0.2px #f4fbe8;">Toán tử so sánh</div>
<div style="position:absolute;left:538.5px;width:800px;text-align:center;top:227.15px;font-family:'Liberation Serif', serif;font-size:13.317px;line-height:13.317px;font-weight:700;color:#f4fbe8;white-space:pre;-webkit-text-stroke:0.2px #f4fbe8;">Nội dung</div>
<div style="position:absolute;left:764.5px;width:800px;text-align:center;top:227.15px;font-family:'Liberation Serif', serif;font-size:13.317px;line-height:13.317px;font-weight:700;color:#f4fbe8;white-space:pre;-webkit-text-stroke:0.2px #f4fbe8;">Ví dụ</div>
<div style="position:absolute;left:632.2px;top:246.24px;font-family:'Liberation Serif', serif;font-size:13.8px;line-height:13.8px;font-weight:400;color:#111111;white-space:pre;-webkit-text-stroke:0.12px #111;letter-spacing:0px;">=</div>
<div style="position:absolute;left:647.3px;top:246.24px;font-family:'Liberation Serif', serif;font-size:13.8px;line-height:13.8px;font-weight:400;color:#111111;white-space:pre;-webkit-text-stroke:0.12px #111;letter-spacing:0px;"><span style="margin-left:1px;margin-right:1.5px;color:#555;-webkit-text-stroke:0px;">(</span>Bằng<span style="margin-left:1.5px;color:#555;-webkit-text-stroke:0px;">)</span></div>
<div style="position:absolute;left:798px;top:246.24px;font-family:'Liberation Serif', serif;font-size:13.8px;line-height:13.8px;font-weight:400;color:#111111;white-space:pre;-webkit-text-stroke:0.12px #111;letter-spacing:0px;">Bên trái bằng với bên phải</div>
<div style="position:absolute;left:1097px;top:246.24px;font-family:'Liberation Serif', serif;font-size:13.8px;line-height:13.8px;font-weight:400;color:#111111;white-space:pre;-webkit-text-stroke:0.12px #111;letter-spacing:0px;">A1=B1</div>
<div style="position:absolute;left:632.2px;top:268.94px;font-family:'Liberation Serif', serif;font-size:13.8px;line-height:13.8px;font-weight:400;color:#111111;white-space:pre;-webkit-text-stroke:0.12px #111;letter-spacing:0px;">&gt;</div>
<div style="position:absolute;left:647.3px;top:268.94px;font-family:'Liberation Serif', serif;font-size:13.8px;line-height:13.8px;font-weight:400;color:#111111;white-space:pre;-webkit-text-stroke:0.12px #111;letter-spacing:0px;"><span style="margin-left:1px;margin-right:1.5px;color:#555;-webkit-text-stroke:0px;">(</span>Lớn hơn<span style="margin-left:1.5px;color:#555;-webkit-text-stroke:0px;">)</span></div>
<div style="position:absolute;left:798px;top:268.94px;font-family:'Liberation Serif', serif;font-size:13.8px;line-height:13.8px;font-weight:400;color:#111111;white-space:pre;-webkit-text-stroke:0.12px #111;letter-spacing:0px;">Bên trái lớn hơn bên phải</div>
<div style="position:absolute;left:1097px;top:268.94px;font-family:'Liberation Serif', serif;font-size:13.8px;line-height:13.8px;font-weight:400;color:#111111;white-space:pre;-webkit-text-stroke:0.12px #111;letter-spacing:0px;">A1&gt;B1</div>
<div style="position:absolute;left:632.2px;top:291.34px;font-family:'Liberation Serif', serif;font-size:13.8px;line-height:13.8px;font-weight:400;color:#111111;white-space:pre;-webkit-text-stroke:0.12px #111;letter-spacing:0px;">&lt;</div>
<div style="position:absolute;left:647.3px;top:291.34px;font-family:'Liberation Serif', serif;font-size:13.8px;line-height:13.8px;font-weight:400;color:#111111;white-space:pre;-webkit-text-stroke:0.12px #111;letter-spacing:0px;"><span style="margin-left:1px;margin-right:1.5px;color:#555;-webkit-text-stroke:0px;">(</span>Nhỏ hơn<span style="margin-left:1.5px;color:#555;-webkit-text-stroke:0px;">)</span></div>
<div style="position:absolute;left:798px;top:291.34px;font-family:'Liberation Serif', serif;font-size:13.8px;line-height:13.8px;font-weight:400;color:#111111;white-space:pre;-webkit-text-stroke:0.12px #111;letter-spacing:0px;">Bên phải nhỏ hơn bên phải</div>
<div style="position:absolute;left:1097px;top:291.34px;font-family:'Liberation Serif', serif;font-size:13.8px;line-height:13.8px;font-weight:400;color:#111111;white-space:pre;-webkit-text-stroke:0.12px #111;letter-spacing:0px;">A1&lt;B1</div>
<div style="position:absolute;left:632.2px;top:314.64px;font-family:'Liberation Serif', serif;font-size:13.8px;line-height:13.8px;font-weight:400;color:#111111;white-space:pre;-webkit-text-stroke:0.12px #111;letter-spacing:0px;">&gt;=</div>
<div style="position:absolute;left:654px;top:314.64px;font-family:'Liberation Serif', serif;font-size:13.8px;line-height:13.8px;font-weight:400;color:#111111;white-space:pre;-webkit-text-stroke:0.12px #111;letter-spacing:0px;"><span style="margin-left:1px;margin-right:1.5px;color:#555;-webkit-text-stroke:0px;">(</span>Lớn hơn hoặc bằng<span style="margin-left:1.5px;color:#555;-webkit-text-stroke:0px;">)</span></div>
<div style="position:absolute;left:798px;top:314.64px;font-family:'Liberation Serif', serif;font-size:13.8px;line-height:13.8px;font-weight:400;color:#111111;white-space:pre;-webkit-text-stroke:0.12px #111;letter-spacing:0px;">Bên trái lớn hơn hoặc bằng bên phải</div>
<div style="position:absolute;left:1097px;top:314.64px;font-family:'Liberation Serif', serif;font-size:13.8px;line-height:13.8px;font-weight:400;color:#111111;white-space:pre;-webkit-text-stroke:0.12px #111;letter-spacing:0px;">A1&gt;=B1</div>
<div style="position:absolute;left:632.2px;top:337.34px;font-family:'Liberation Serif', serif;font-size:13.8px;line-height:13.8px;font-weight:400;color:#111111;white-space:pre;-webkit-text-stroke:0.12px #111;letter-spacing:0px;">&lt;=</div>
<div style="position:absolute;left:654px;top:337.34px;font-family:'Liberation Serif', serif;font-size:13.8px;line-height:13.8px;font-weight:400;color:#111111;white-space:pre;-webkit-text-stroke:0.12px #111;letter-spacing:0px;"><span style="margin-left:1px;margin-right:1.5px;color:#555;-webkit-text-stroke:0px;">(</span>Nhỏ hơn hoặc bằng<span style="margin-left:1.5px;color:#555;-webkit-text-stroke:0px;">)</span></div>
<div style="position:absolute;left:798px;top:337.34px;font-family:'Liberation Serif', serif;font-size:13.8px;line-height:13.8px;font-weight:400;color:#111111;white-space:pre;-webkit-text-stroke:0.12px #111;letter-spacing:0px;">Bên trái nhỏ hơn hoặc bằng bên phải</div>
<div style="position:absolute;left:1097px;top:337.34px;font-family:'Liberation Serif', serif;font-size:13.8px;line-height:13.8px;font-weight:400;color:#111111;white-space:pre;-webkit-text-stroke:0.12px #111;letter-spacing:0px;">A1&lt;=B1</div>
<div style="position:absolute;left:632.2px;top:359.74px;font-family:'Liberation Serif', serif;font-size:13.8px;line-height:13.8px;font-weight:400;color:#111111;white-space:pre;-webkit-text-stroke:0.12px #111;letter-spacing:0px;">&lt;&gt;</div>
<div style="position:absolute;left:654px;top:359.74px;font-family:'Liberation Serif', serif;font-size:13.8px;line-height:13.8px;font-weight:400;color:#111111;white-space:pre;-webkit-text-stroke:0.12px #111;letter-spacing:0px;"><span style="margin-left:1px;margin-right:1.5px;color:#555;-webkit-text-stroke:0px;">(</span>Khác<span style="margin-left:1.5px;color:#555;-webkit-text-stroke:0px;">)</span></div>
<div style="position:absolute;left:798px;top:359.74px;font-family:'Liberation Serif', serif;font-size:13.8px;line-height:13.8px;font-weight:400;color:#111111;white-space:pre;-webkit-text-stroke:0.12px #111;letter-spacing:0px;">Bên trái và bên phải khác nhau</div>
<div style="position:absolute;left:1097px;top:359.74px;font-family:'Liberation Serif', serif;font-size:13.8px;line-height:13.8px;font-weight:400;color:#111111;white-space:pre;-webkit-text-stroke:0.12px #111;letter-spacing:0px;">A1&lt;&gt;B1</div>
<div style="position:absolute;left:-295.0px;width:800px;text-align:center;top:440.75px;font-family:'Liberation Serif', serif;font-size:13.317px;line-height:13.317px;font-weight:700;color:#f4fbe8;white-space:pre;-webkit-text-stroke:0.2px #f4fbe8;">Toán tử nối chuỗi</div>
<div style="position:absolute;left:-111.0px;width:800px;text-align:center;top:440.75px;font-family:'Liberation Serif', serif;font-size:13.317px;line-height:13.317px;font-weight:700;color:#f4fbe8;white-space:pre;-webkit-text-stroke:0.2px #f4fbe8;">Nội dung</div>
<div style="position:absolute;left:78.5px;width:800px;text-align:center;top:440.75px;font-family:'Liberation Serif', serif;font-size:13.317px;line-height:13.317px;font-weight:700;color:#f4fbe8;white-space:pre;-webkit-text-stroke:0.2px #f4fbe8;">Ví dụ</div>
<div style="position:absolute;left:38.8px;top:463.34px;font-family:'Liberation Serif', serif;font-size:13.8px;line-height:13.8px;font-weight:400;color:#111111;white-space:pre;-webkit-text-stroke:0.12px #111;letter-spacing:0px;">&amp;</div>
<div style="position:absolute;left:57.6px;top:463.34px;font-family:'Liberation Serif', serif;font-size:13.8px;line-height:13.8px;font-weight:400;color:#111111;white-space:pre;-webkit-text-stroke:0.12px #111;letter-spacing:0px;"><span style="margin-left:1px;margin-right:1.5px;color:#555;-webkit-text-stroke:0px;">(</span> dấu "và"<span style="margin-left:1.5px;color:#555;-webkit-text-stroke:0px;">)</span></div>
<div style="position:absolute;left:189.5px;top:462.14px;font-family:'Liberation Serif', serif;font-size:13.8px;line-height:13.8px;font-weight:400;color:#111111;white-space:pre;-webkit-text-stroke:0.12px #111;letter-spacing:0px;">Nối hai chuỗi, phía trước và phía</div>
<div style="position:absolute;left:189.5px;top:478.54px;font-family:'Liberation Serif', serif;font-size:13.8px;line-height:13.8px;font-weight:400;color:#111111;white-space:pre;-webkit-text-stroke:0.12px #111;letter-spacing:0px;">sau dấu "&amp;" lại thành một chuỗi</div>
<div style="position:absolute;left:400px;top:462.74px;font-family:'Liberation Serif', serif;font-size:13.8px;line-height:13.8px;font-weight:400;color:#111111;white-space:pre;-webkit-text-stroke:0.12px #111;letter-spacing:0px;"><span style="margin-left:1px;margin-right:1.5px;color:#555;-webkit-text-stroke:0px;">(</span>“Hà Nội”&amp;“Hồ Chí Minh”<span style="margin-left:1.5px;color:#555;-webkit-text-stroke:0px;">)</span></div>
<div style="position:absolute;left:306.5px;width:800px;text-align:center;top:421.15px;font-family:'Liberation Serif', serif;font-size:13.317px;line-height:13.317px;font-weight:700;color:#ffffff;white-space:pre;-webkit-text-stroke:0.2px #ffffff;">Toán tử tham chiếu</div>
<div style="position:absolute;left:538.5px;width:800px;text-align:center;top:421.15px;font-family:'Liberation Serif', serif;font-size:13.317px;line-height:13.317px;font-weight:700;color:#ffffff;white-space:pre;-webkit-text-stroke:0.2px #ffffff;">Nội dung</div>
<div style="position:absolute;left:764.5px;width:800px;text-align:center;top:421.15px;font-family:'Liberation Serif', serif;font-size:13.317px;line-height:13.317px;font-weight:700;color:#ffffff;white-space:pre;-webkit-text-stroke:0.2px #ffffff;">Ví dụ</div>
<div style="position:absolute;left:632.8px;top:441.24px;font-family:'Liberation Serif', serif;font-size:13.8px;line-height:13.8px;font-weight:400;color:#111111;white-space:pre;-webkit-text-stroke:0.12px #111;letter-spacing:0px;">:</div>
<div style="position:absolute;left:643px;top:441.24px;font-family:'Liberation Serif', serif;font-size:13.8px;line-height:13.8px;font-weight:400;color:#111111;white-space:pre;-webkit-text-stroke:0.12px #111;letter-spacing:0px;"><span style="margin-left:1px;margin-right:1.5px;color:#555;-webkit-text-stroke:0px;">(</span>dấu hai chấm<span style="margin-left:1.5px;color:#555;-webkit-text-stroke:0px;">)</span></div>
<div style="position:absolute;left:632.8px;top:463.94px;font-family:'Liberation Serif', serif;font-size:13.8px;line-height:13.8px;font-weight:400;color:#111111;white-space:pre;-webkit-text-stroke:0.12px #111;letter-spacing:0px;">,</div>
<div style="position:absolute;left:643px;top:463.94px;font-family:'Liberation Serif', serif;font-size:13.8px;line-height:13.8px;font-weight:400;color:#111111;white-space:pre;-webkit-text-stroke:0.12px #111;letter-spacing:0px;"><span style="margin-left:1px;margin-right:1.5px;color:#555;-webkit-text-stroke:0px;">(</span>dấu phẩy<span style="margin-left:1.5px;color:#555;-webkit-text-stroke:0px;">)</span></div>
<div style="position:absolute;left:643px;top:489.34px;font-family:'Liberation Serif', serif;font-size:13.8px;line-height:13.8px;font-weight:400;color:#111111;white-space:pre;-webkit-text-stroke:0.12px #111;letter-spacing:0px;"><span style="margin-left:1px;margin-right:1.5px;color:#555;-webkit-text-stroke:0px;">(</span>khoảng trống<span style="margin-left:1.5px;color:#555;-webkit-text-stroke:0px;">)</span></div>
<div style="position:absolute;left:798.5px;top:441.24px;font-family:'Liberation Serif', serif;font-size:13.8px;line-height:13.8px;font-weight:400;color:#111111;white-space:pre;-webkit-text-stroke:0.12px #111;letter-spacing:0px;">Toán tử tham chiếu phạm vi ô</div>
<div style="position:absolute;left:798.5px;top:463.94px;font-family:'Liberation Serif', serif;font-size:13.8px;line-height:13.8px;font-weight:400;color:#111111;white-space:pre;-webkit-text-stroke:0.12px #111;letter-spacing:0px;">Toán tử tham chiếu liên kết các tham chiếu</div>
<div style="position:absolute;left:798.5px;top:490.34px;font-family:'Liberation Serif', serif;font-size:13.8px;line-height:13.8px;font-weight:400;color:#111111;white-space:pre;-webkit-text-stroke:0.12px #111;letter-spacing:0px;">Toán tử tham chiếu biểu thị giao điểm</div>
<div style="position:absolute;left:1096.5px;top:441.24px;font-family:'Liberation Serif', serif;font-size:13.8px;line-height:13.8px;font-weight:400;color:#111111;white-space:pre;-webkit-text-stroke:0.12px #111;letter-spacing:-0.65px;">B7:B12</div>
<div style="position:absolute;left:1096px;top:463.94px;font-family:'Liberation Serif', serif;font-size:13.8px;line-height:13.8px;font-weight:400;color:#111111;white-space:pre;-webkit-text-stroke:0.12px #111;letter-spacing:-0.38px;">SUM(A7:A12,D7:D12)</div>
<div style="position:absolute;left:1096.3px;top:490.34px;font-family:'Liberation Serif', serif;font-size:13.8px;line-height:13.8px;font-weight:400;color:#111111;white-space:pre;-webkit-text-stroke:0.12px #111;letter-spacing:-0.55px;">A2:C3 C4:D5</div>
<div style="position:absolute;left:22px;top:222px;width:167px;height:21px;border:2px solid #1e5a34;box-sizing:border-box"></div>
<div style="position:absolute;left:24px;top:224px;width:163px;height:17px;border:1.5px solid #c8f0fa;box-sizing:border-box"></div>
<div style="position:absolute;left:185px;top:239px;width:5px;height:5px;background:#1e7a3a;outline:1px solid #fff"></div>
<svg style="position:absolute;left:206px;top:232px;" width="16" height="17" viewBox="0 0 16 17"><path d="M5.5 1 H10.5 V6 H15 V11 H10.5 V16 H5.5 V11 H1 V6 H5.5 Z" fill="#fff" stroke="#000" stroke-width="1.6"/></svg>
<svg style="position:absolute;left:1075px;top:630px;filter:blur(0.5px);" width="140" height="45" viewBox="0 0 140 45"><g opacity="0.36" fill="#9a9a9a" stroke="none"><path d="M6.5 39.4 C7 22 20 7.1 40.5 7.1 L40.5 39.4 L31.7 39.4 L31.7 31.5 L18 31.5 L15.5 39.4 Z M31.7 23 L31.7 15.5 C26 16 22 19 20 23 Z"/><path d="M41.6 22 L48.1 22 L48.1 20 L56.9 18 L56.9 22 L58 22 L58 20 L66.7 18 L66.7 22 L70 22 L70 30 L66.7 30 L66.7 39.4 L58 39.4 L58 30 L56.9 30 L56.9 39.4 L48.1 39.4 L48.1 30 L41.6 30 Z"/><path d="M84.2 18.6 A10.4 10.4 0 1 0 87.5 38.9 L87.5 39.4 L96.3 39.4 L96.3 29 A10.4 10.4 0 0 0 84.2 18.6 Z M84.5 25.2 A3.9 3.9 0 1 1 84.5 33 A3.9 3.9 0 1 1 84.5 25.2 Z" fill-rule="evenodd"/><circle cx="104" cy="10.4" r="4.2"/><rect x="100.1" y="18" width="8.2" height="21.4"/><path d="M111.6 39.4 L111.6 28.5 A11.5 10.5 0 0 1 134.6 28.5 L134.6 39.4 L126 39.4 L126 28.5 A2.9 3 0 0 0 120.2 28.5 L120.2 39.4 Z"/></g></svg>
</body></html>
